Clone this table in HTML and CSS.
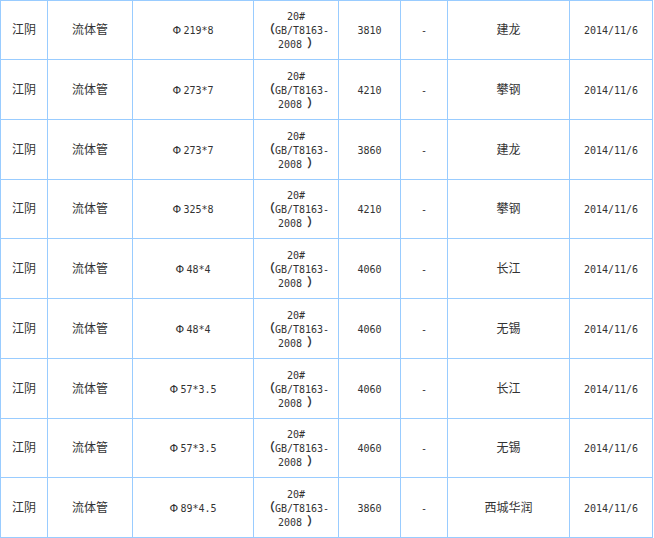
FILE: index.html
```html
<!DOCTYPE html>
<html lang="zh-CN">
<head>
<meta charset="utf-8">
<title>流体管价格</title>
<link rel="stylesheet" href="styles.css">
</head>
<body>
<table class="price">
  <colgroup>
    <col class="c1"><col class="c2"><col class="c3"><col class="c4">
    <col class="c5"><col class="c6"><col class="c7"><col class="c8">
  </colgroup>
  <tbody>
    <tr class="r59"><td>江阴</td><td>流体管</td><td><span class="phi">Φ</span><span class="n">219*8</span></td><td><span class="n">20#</span><br><span class="pl">（</span><span class="n">GB/T8163-</span><br><span class="n">2008</span><span class="pr">）</span></td><td><span class="n">3810</span></td><td><span class="n">-</span></td><td>建龙</td><td><span class="n">2014/11/6</span></td></tr>
    <tr><td>江阴</td><td>流体管</td><td><span class="phi">Φ</span><span class="n">273*7</span></td><td><span class="n">20#</span><br><span class="pl">（</span><span class="n">GB/T8163-</span><br><span class="n">2008</span><span class="pr">）</span></td><td><span class="n">4210</span></td><td><span class="n">-</span></td><td>攀钢</td><td><span class="n">2014/11/6</span></td></tr>
    <tr><td>江阴</td><td>流体管</td><td><span class="phi">Φ</span><span class="n">273*7</span></td><td><span class="n">20#</span><br><span class="pl">（</span><span class="n">GB/T8163-</span><br><span class="n">2008</span><span class="pr">）</span></td><td><span class="n">3860</span></td><td><span class="n">-</span></td><td>建龙</td><td><span class="n">2014/11/6</span></td></tr>
    <tr class="r59"><td>江阴</td><td>流体管</td><td><span class="phi">Φ</span><span class="n">325*8</span></td><td><span class="n">20#</span><br><span class="pl">（</span><span class="n">GB/T8163-</span><br><span class="n">2008</span><span class="pr">）</span></td><td><span class="n">4210</span></td><td><span class="n">-</span></td><td>攀钢</td><td><span class="n">2014/11/6</span></td></tr>
    <tr><td>江阴</td><td>流体管</td><td><span class="phi">Φ</span><span class="n">48*4</span></td><td><span class="n">20#</span><br><span class="pl">（</span><span class="n">GB/T8163-</span><br><span class="n">2008</span><span class="pr">）</span></td><td><span class="n">4060</span></td><td><span class="n">-</span></td><td>长江</td><td><span class="n">2014/11/6</span></td></tr>
    <tr><td>江阴</td><td>流体管</td><td><span class="phi">Φ</span><span class="n">48*4</span></td><td><span class="n">20#</span><br><span class="pl">（</span><span class="n">GB/T8163-</span><br><span class="n">2008</span><span class="pr">）</span></td><td><span class="n">4060</span></td><td><span class="n">-</span></td><td>无锡</td><td><span class="n">2014/11/6</span></td></tr>
    <tr><td>江阴</td><td>流体管</td><td><span class="phi">Φ</span><span class="n">57*3.5</span></td><td><span class="n">20#</span><br><span class="pl">（</span><span class="n">GB/T8163-</span><br><span class="n">2008</span><span class="pr">）</span></td><td><span class="n">4060</span></td><td><span class="n">-</span></td><td>长江</td><td><span class="n">2014/11/6</span></td></tr>
    <tr class="r59"><td>江阴</td><td>流体管</td><td><span class="phi">Φ</span><span class="n">57*3.5</span></td><td><span class="n">20#</span><br><span class="pl">（</span><span class="n">GB/T8163-</span><br><span class="n">2008</span><span class="pr">）</span></td><td><span class="n">4060</span></td><td><span class="n">-</span></td><td>无锡</td><td><span class="n">2014/11/6</span></td></tr>
    <tr><td>江阴</td><td>流体管</td><td><span class="phi">Φ</span><span class="n">89*4.5</span></td><td><span class="n">20#</span><br><span class="pl">（</span><span class="n">GB/T8163-</span><br><span class="n">2008</span><span class="pr">）</span></td><td><span class="n">3860</span></td><td><span class="n">-</span></td><td>西城华润</td><td><span class="n">2014/11/6</span></td></tr>
  </tbody>
</table>
</body>
</html>
```
FILE: styles.css
```css
html, body {
  margin: 0;
  padding: 0;
  background: #fff;
}
.price {
  border-collapse: collapse;
  table-layout: fixed;
  width: 653px;
  font-family: "Noto Sans CJK SC", sans-serif;
  font-size: 12px;
  line-height: 14px;
  color: #333;
}
.price td {
  border: 1px solid #99ccff;
  text-align: center;
  vertical-align: middle;
  padding: 0 0 2px;
  height: 57px;
}
.price tr.r59 td {
  height: 56px;
}
.price .n {
  font-family: "DejaVu Sans Mono", monospace;
  font-size: 10px;
  line-height: 10px;
}
.price .phi {
  display: inline-block;
  width: 11px;
  text-align: left;
  font-family: "DejaVu Sans", sans-serif;
  font-size: 11px;
  line-height: 10px;
}
.price .pl,
.price .pr {
  display: inline-block;
  line-height: 10px;
  font-weight: bold;
}
.price .pl {
  width: 10px;
  padding-right: 2px;
  text-align: right;
}
.price .pr {
  width: 7px;
  padding-left: 5px;
  text-align: left;
}
.c1 { width: 47px; }
.c2 { width: 85px; }
.c3 { width: 121px; }
.c4 { width: 85px; }
.c5 { width: 62px; }
.c6 { width: 47px; }
.c7 { width: 122px; }
.c8 { width: 83px; }
```
